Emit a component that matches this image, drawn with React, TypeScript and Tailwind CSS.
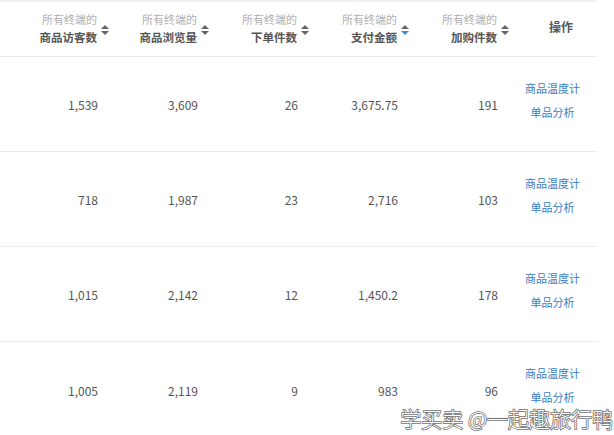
import React from "react"

type Row = {
  visitors: string
  views: string
  orders: string
  amount: string
  carts: string
}

const rows: Row[] = [
  { visitors: "1,539", views: "3,609", orders: "26", amount: "3,675.75", carts: "191" },
  { visitors: "718", views: "1,987", orders: "23", amount: "2,716", carts: "103" },
  { visitors: "1,015", views: "2,142", orders: "12", amount: "1,450.2", carts: "178" },
  { visitors: "1,005", views: "2,119", orders: "9", amount: "983", carts: "96" },
]

const columns = [
  { label: "商品访客数", active: false },
  { label: "商品浏览量", active: false },
  { label: "下单件数", active: false },
  { label: "支付金额", active: true },
  { label: "加购件数", active: false },
]

function SortIcon({ active }: { active: boolean }) {
  return (
    <svg width="8" height="10" viewBox="0 0 8 10" className="ml-[4px] -mr-[12px] mt-[2px] shrink-0">
      <path d="M4 0 L8 4 L0 4 Z" fill="#666" />
      <path d="M0 6 L8 6 L4 10 Z" fill={active ? "#3f8fd6" : "#666"} />
    </svg>
  )
}

export default function App() {
  return (
    <div
      className="relative w-[614px] h-[435px] overflow-hidden bg-white"
      style={{ fontFamily: '"Noto Sans CJK SC", "Noto Sans", sans-serif' }}
    >
      <div className="h-[2px] w-[597px] bg-[#f2f2f2]" />
      <div className="w-[597px]">
        {/* header */}
        <div className="flex h-[55px] border-b border-[#ebebeb]">
          {columns.map((c) => (
            <div key={c.label} className="w-[100px] flex justify-end items-center pr-[3px]">
              <div className="flex flex-col items-end leading-none">
                <span className="text-[11px] text-[#b0b0b0]">所有终端的</span>
                <span className="text-[11.5px] font-bold text-[#555] mt-[7px]">{c.label}</span>
              </div>
              <SortIcon active={c.active} />
            </div>
          ))}
          <div className="flex-1 flex items-center justify-center pl-[25px] pb-[4px]">
            <span className="text-[12px] font-bold text-[#555]">操作</span>
          </div>
        </div>

        {/* body */}
        {rows.map((r, i) => (
          <div
            key={i}
            className={
              "flex h-[95px] items-center " + (i < rows.length - 1 ? "border-b border-[#ebebeb]" : "")
            }
          >
            {[r.visitors, r.views, r.orders, r.amount, r.carts].map((v, j) => (
              <div key={j} className="w-[100px] text-right pr-[2px] pt-[2px] text-[12px] text-[#555]">
                {v}
              </div>
            ))}
            <div className="flex-1 flex flex-col items-center pl-[8px] pb-[8px] gap-[13px] text-[11px] text-[#3a7dbf] leading-none">
              <span>商品温度计</span>
              <span>单品分析</span>
            </div>
          </div>
        ))}
      </div>

      <div
        className="absolute right-[1px] bottom-[6px] text-[21px] font-light leading-none text-white"
        style={{
          WebkitTextStroke: "1.6px #6f6f6f",
          paintOrder: "stroke fill",
          fontFamily: '"Noto Sans CJK SC", sans-serif',
        }}
      >
        学买卖 @一起趣旅行鸭
      </div>
    </div>
  )
}
